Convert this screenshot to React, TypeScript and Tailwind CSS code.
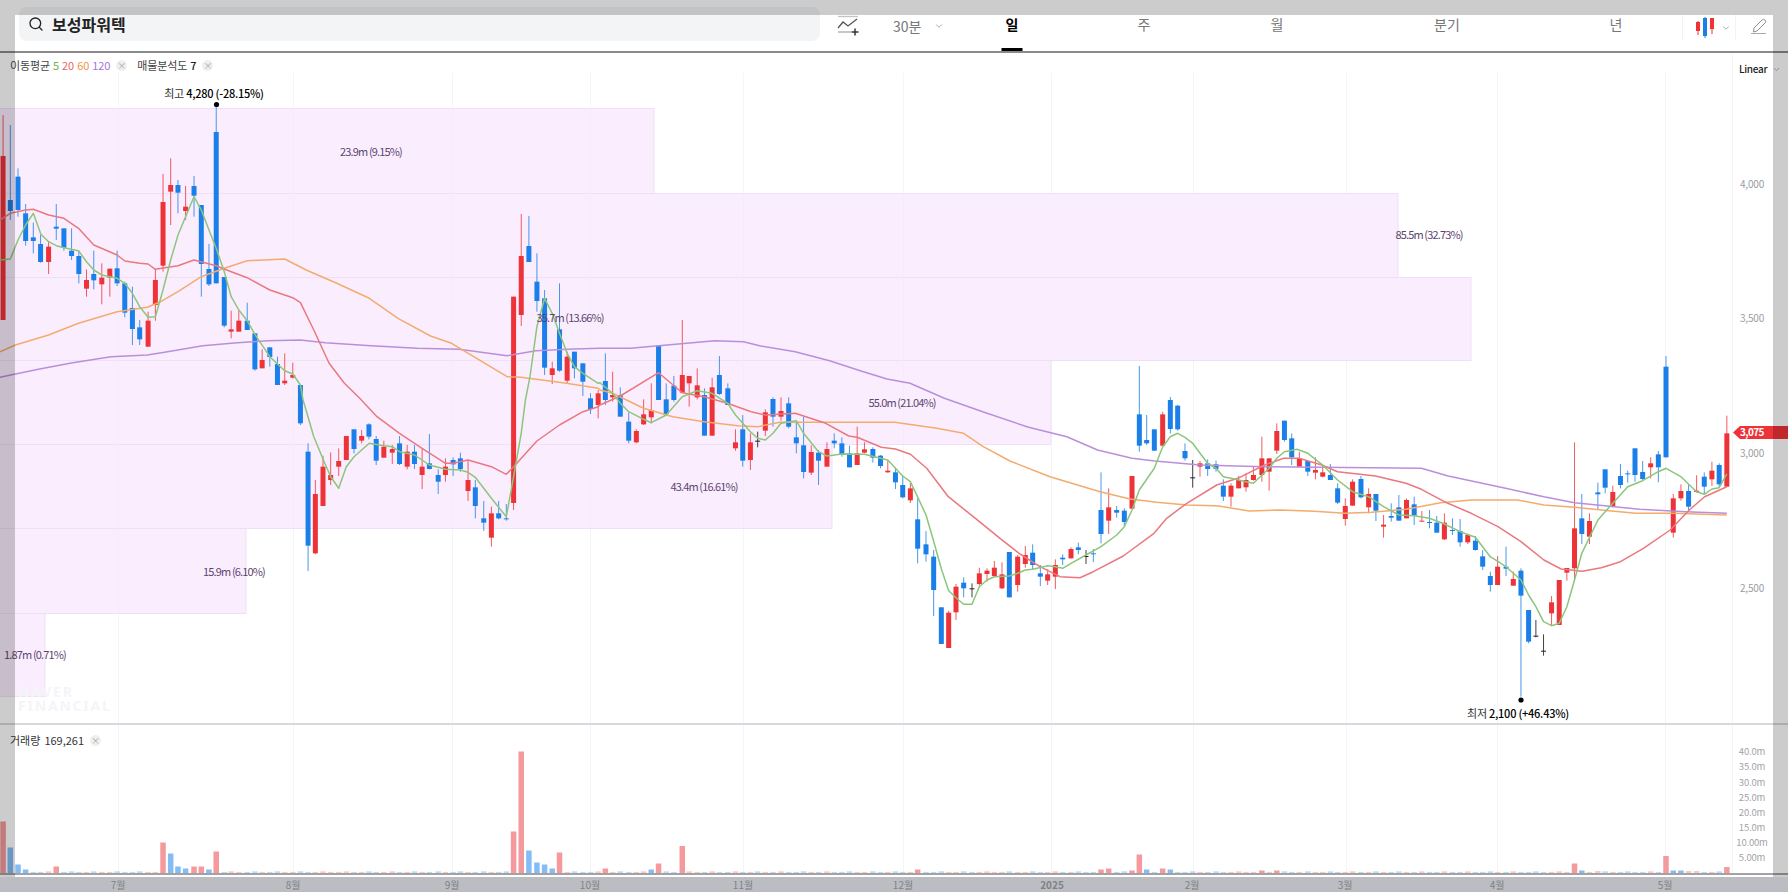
import React from "react";
import { Search, ChevronDown } from "lucide-react";

type Frame = (x: number, y: number) => [number, number];
const F3: Frame = (x, y) => [x / 2.613, 100 + y / 3];
const F5: Frame = (x, y) => [x / 2.613, 400 + y / 3];
const F4: Frame = (x, y) => [600 + x / 2.613, 200 + y / 3];
const F9: Frame = (x, y) => [850 + x / 3, 400 + y / 3];
const F8: Frame = (x, y) => [1188 + x / 2.613, 350 + y / 3];

type Raw = [number, number, number, number, number, string];
type C = { x: number; t: number; b: number; h: number; l: number; c: string };

const mapC = (f: Frame, rows: Raw[]): C[] =>
  rows.map(([x, t, b, h, l, c]) => {
    const [rx, rt] = f(x, t);
    const [, rb] = f(x, b);
    const [, rh] = f(x, h);
    const [, rl] = f(x, l);
    return { x: rx, t: rt, b: rb, h: rh, l: rl, c };
  });

const candles: C[] = [
  ...mapC(F3, [
    [8, 168, 660, 45, 660, "r"], [27, 300, 333, 75, 360, "b"], [47, 230, 330, 205, 350, "b"], [67, 340, 423, 312, 437, "b"],
    [87, 412, 423, 368, 460, "b"], [106, 432, 486, 405, 488, "b"], [127, 440, 486, 425, 522, "r"], [147, 380, 386, 312, 420, "b"],
    [167, 385, 443, 385, 452, "b"], [187, 452, 468, 385, 480, "b"], [206, 468, 522, 452, 550, "b"], [226, 540, 566, 508, 590, "r"],
    [245, 522, 541, 452, 568, "b"], [266, 533, 553, 490, 613, "r"], [287, 506, 533, 506, 590, "r"], [306, 505, 550, 452, 558, "b"],
    [326, 550, 638, 545, 652, "b"], [346, 624, 687, 560, 735, "b"], [365, 682, 718, 660, 735, "b"], [387, 662, 740, 635, 740, "r"],
    [406, 540, 615, 507, 662, "r"], [426, 306, 497, 222, 515, "r"], [446, 255, 275, 175, 375, "r"], [465, 255, 278, 240, 340, "b"],
    [485, 320, 333, 258, 360, "r"], [507, 258, 287, 228, 350, "b"], [526, 315, 492, 315, 590, "b"], [546, 507, 553, 432, 558, "b"],
    [565, 96, 550, 12, 550, "b"], [586, 531, 677, 531, 682, "b"], [604, 688, 695, 632, 715, "r"], [624, 662, 695, 632, 695, "r"],
    [646, 662, 690, 608, 690, "b"], [666, 700, 808, 700, 812, "b"], [685, 780, 805, 748, 805, "r"], [705, 742, 771, 742, 800, "b"],
    [725, 792, 855, 770, 855, "b"], [744, 842, 850, 760, 855, "r"], [765, 825, 833, 788, 835, "r"], [785, 855, 970, 855, 975, "b"],
  ]),
  ...mapC(F5, [
    [805, 155, 437, 130, 513, "b"], [824, 282, 460, 240, 463, "r"], [844, 200, 318, 167, 318, "r"], [864, 225, 240, 157, 255, "r"],
    [885, 183, 200, 145, 228, "r"], [905, 108, 180, 108, 180, "r"], [925, 88, 147, 88, 160, "b"], [945, 108, 122, 90, 130, "r"],
    [964, 73, 110, 70, 118, "b"], [983, 117, 182, 108, 195, "b"], [1003, 140, 173, 122, 173, "r"], [1025, 147, 158, 135, 192, "r"],
    [1044, 130, 192, 108, 195, "b"], [1064, 155, 200, 135, 208, "r"], [1083, 155, 192, 135, 207, "b"], [1103, 200, 225, 145, 267, "r"],
    [1122, 190, 207, 102, 208, "b"], [1145, 225, 245, 208, 282, "b"], [1164, 200, 225, 175, 245, "r"], [1184, 180, 193, 172, 228, "b"],
    [1203, 175, 207, 158, 215, "b"], [1223, 240, 273, 180, 303, "r"], [1242, 262, 318, 240, 355, "b"], [1264, 355, 368, 303, 393, "b"],
    [1284, 340, 413, 320, 440, "r"], [1303, 340, 355, 303, 358, "b"], [1323, 355, 357, 312, 362, "b"],
  ]),
  ...mapC(F3, [
    [1342, 590, 1209, 590, 1230, "r"], [1362, 468, 645, 342, 678, "r"], [1382, 438, 486, 348, 486, "b"], [1403, 545, 603, 460, 635, "b"],
    [1423, 595, 803, 570, 825, "b"], [1443, 805, 825, 785, 852, "r"], [1462, 688, 812, 550, 815, "b"], [1482, 770, 842, 755, 852, "r"],
    [1501, 755, 805, 755, 835, "b"], [1523, 790, 845, 790, 888, "b"], [1543, 895, 927, 880, 942, "b"], [1563, 880, 915, 870, 955, "r"],
  ]),
  ...mapC(F4, [
    [14, 543, 600, 460, 615, "b"], [33, 585, 592, 515, 605, "r"], [53, 585, 650, 562, 650, "b"], [75, 665, 722, 637, 730, "b"],
    [95, 693, 727, 688, 730, "r"], [114, 643, 673, 598, 675, "r"], [134, 630, 652, 550, 670, "r"], [153, 437, 600, 437, 600, "b"],
    [173, 598, 642, 550, 645, "b"], [193, 557, 600, 528, 605, "b"], [215, 525, 578, 360, 578, "r"], [233, 528, 550, 528, 620, "r"],
    [254, 556, 592, 505, 598, "r"], [273, 585, 707, 565, 707, "b"], [293, 562, 707, 533, 707, "r"], [312, 525, 582, 468, 585, "b"],
    [334, 565, 615, 550, 615, "b"], [354, 727, 745, 688, 752, "r"], [373, 688, 782, 645, 800, "b"], [393, 727, 780, 700, 810, "r"],
    [412, 722, 724, 695, 742, "d"], [432, 637, 692, 628, 708, "r"], [452, 597, 650, 592, 680, "b"], [473, 633, 650, 592, 662, "r"],
    [493, 610, 680, 592, 685, "b"], [513, 712, 730, 665, 760, "b"], [532, 736, 816, 650, 835, "b"], [552, 756, 818, 736, 825, "r"],
    [571, 758, 782, 750, 855, "b"], [593, 747, 800, 727, 800, "r"], [612, 722, 730, 700, 745, "b"], [632, 730, 765, 712, 770, "b"],
    [652, 760, 802, 737, 802, "b"], [672, 760, 795, 680, 795, "r"], [691, 748, 758, 727, 760, "r"], [713, 747, 773, 742, 788, "b"],
    [733, 767, 798, 765, 805, "b"], [752, 812, 817, 782, 818, "r"], [772, 817, 847, 803, 867, "b"], [791, 855, 892, 828, 895, "b"],
    [811, 865, 901, 845, 909, "r"],
  ]),
  ...mapC(F9, [
    [203, 358, 446, 295, 490, "b"], [228, 433, 463, 393, 485, "b"], [251, 470, 570, 450, 648, "b"], [274, 622, 732, 622, 732, "b"],
    [296, 638, 744, 632, 744, "r"], [318, 560, 637, 552, 660, "r"], [341, 548, 565, 532, 592, "b"], [366, 565, 567, 550, 592, "d"],
    [388, 520, 552, 503, 557, "r"], [411, 512, 522, 505, 545, "r"], [433, 503, 528, 483, 530, "r"], [456, 523, 565, 487, 567, "r"],
    [478, 456, 592, 456, 592, "b"], [503, 470, 555, 465, 575, "r"], [526, 465, 492, 438, 503, "r"], [548, 458, 495, 433, 510, "b"],
    [571, 520, 530, 495, 558, "b"], [593, 523, 542, 508, 555, "r"], [616, 495, 530, 478, 567, "r"], [638, 473, 478, 463, 495, "b"],
    [663, 447, 475, 442, 476, "r"], [685, 442, 450, 428, 463, "b"], [708, 468, 470, 450, 492, "d"], [730, 460, 463, 447, 486, "b"],
    [753, 330, 402, 217, 430, "b"], [776, 322, 362, 265, 402, "r"], [800, 330, 338, 318, 353, "b"], [823, 332, 366, 325, 378, "b"],
    [846, 228, 326, 228, 326, "r"], [868, 43, 137, -102, 155, "b"], [890, 120, 130, 45, 135, "b"], [913, 88, 152, 88, 152, "b"],
    [938, 43, 137, 35, 137, "r"], [961, 0, 87, -9, 100, "b"], [983, 17, 88, 15, 92, "b"], [1005, 153, 175, 130, 182, "b"],
    [1028, 232, 234, 180, 263, "d"], [1050, 190, 200, 183, 230, "r"], [1073, 190, 207, 178, 228, "b"], [1098, 193, 207, 182, 215, "b"],
    [1120, 257, 290, 238, 303, "b"], [1143, 257, 290, 250, 320, "r"], [1166, 240, 265, 228, 265, "r"], [1188, 240, 262, 220, 275, "r"],
  ]),
  ...mapC(F8, [
    [171, 375, 390, 350, 392, "r"], [193, 325, 375, 260, 395, "r"], [212, 325, 365, 325, 422, "r"], [232, 243, 302, 220, 312, "r"],
    [252, 212, 270, 212, 275, "b"], [271, 265, 322, 250, 345, "b"], [291, 325, 350, 305, 350, "r"], [313, 333, 365, 333, 378, "b"],
    [333, 360, 368, 322, 388, "r"], [352, 367, 380, 345, 382, "r"], [372, 375, 390, 342, 390, "b"], [391, 415, 458, 400, 462, "b"],
    [411, 468, 507, 445, 527, "r"], [430, 395, 467, 388, 467, "r"], [452, 387, 442, 378, 445, "b"], [472, 432, 472, 415, 490, "r"],
    [491, 432, 482, 432, 513, "b"], [511, 524, 530, 495, 563, "r"], [531, 498, 503, 460, 515, "b"], [551, 472, 512, 435, 512, "b"],
    [571, 450, 505, 445, 505, "r"], [591, 463, 497, 440, 525, "b"], [611, 512, 514, 483, 514, "r"], [631, 516, 518, 480, 535, "b"],
    [650, 518, 548, 498, 548, "b"], [670, 518, 568, 490, 570, "r"], [691, 540, 543, 505, 555, "b"], [711, 543, 577, 507, 590, "b"],
    [731, 555, 577, 553, 582, "r"], [751, 572, 600, 558, 602, "b"], [770, 619, 650, 600, 660, "b"], [790, 678, 705, 665, 725, "b"],
    [809, 650, 705, 618, 705, "r"], [831, 650, 656, 590, 678, "b"], [850, 687, 707, 665, 708, "r"], [870, 662, 737, 655, 1040, "b"],
    [890, 780, 875, 780, 880, "b"], [909, 857, 859, 810, 862, "d"], [929, 902, 904, 853, 917, "d"], [950, 757, 790, 738, 825, "r"],
    [970, 690, 825, 690, 825, "r"], [990, 654, 668, 654, 692, "r"], [1010, 535, 655, 277, 688, "r"], [1029, 505, 552, 432, 582, "b"],
    [1049, 513, 560, 490, 582, "r"], [1071, 427, 433, 398, 480, "b"], [1090, 358, 413, 358, 430, "b"], [1110, 426, 470, 407, 472, "r"],
    [1130, 378, 405, 342, 415, "b"], [1149, 370, 373, 362, 398, "b"], [1168, 295, 375, 295, 395, "b"], [1188, 366, 387, 333, 390, "b"],
    [1209, 340, 352, 322, 385, "r"], [1229, 313, 352, 303, 397, "b"], [1249, 50, 322, 18, 322, "b"], [1268, 445, 548, 432, 563, "r"],
    [1288, 423, 445, 403, 452, "r"], [1308, 423, 470, 405, 482, "b"], [1329, 422, 426, 376, 428, "r"], [1349, 380, 410, 367, 435, "b"],
    [1369, 362, 388, 335, 408, "r"], [1388, 345, 403, 340, 412, "b"], [1408, 250, 410, 197, 410, "r"],
  ]),
];

const seg = (f: Frame, pts: number[][]) => pts.map(([x, y]) => f(x, y));
const toPts = (p: [number, number][]) => p.map(([x, y]) => `${x.toFixed(1)},${y.toFixed(1)}`).join(" ");

const green = [
  ...seg(F3, [[0,480],[27,477],[47,420],[67,375],[87,340],[107,403],[127,425],[147,437],[167,443],[205,452],[226,485],[245,510],[266,525],[306,535],[326,550],[346,580],[365,620],[387,652],[406,650],[426,570],[446,480],[465,405],[485,350],[507,290],[526,330],[546,390],[565,445],[586,515],[604,590],[624,630],[646,662],[666,703],[705,770],[744,812],[765,822],[785,855]]),
  ...seg(F5, [[792,0],[820,110],[845,180],[864,230],[885,265],[905,200],[925,170],[945,150],[965,130],[1003,137],[1025,140],[1044,155],[1083,165],[1122,195],[1164,208],[1203,210],[1223,217],[1242,232],[1284,295],[1323,350],[1342,230],[1362,100],[1373,0]]),
  ...seg(F3, [[1385,830],[1403,680],[1423,595],[1443,640],[1462,700],[1482,760],[1501,800],[1523,820],[1563,850]]),
  ...seg(F4, [[0,548],[33,580],[53,610],[75,635],[114,658],[134,668],[173,645],[215,590],[254,572],[293,580],[334,610],[354,645],[393,695],[412,715],[432,720],[452,700],[473,670],[513,662],[532,700],[571,755],[593,768],[632,762],[691,763],[752,780],[791,828]]),
  ...seg(F9, [[181,245],[205,295],[228,345],[250,420],[275,510],[296,572],[318,593],[341,613],[366,613],[388,560],[411,540],[433,530],[478,528],[503,520],[526,510],[548,508],[593,497],[616,500],[638,505],[663,490],[708,465],[753,440],[800,405],[823,380],[846,330],[868,270],[913,205],[938,140],[961,110],[983,100],[1005,112],[1028,130],[1050,160],[1073,190],[1098,205],[1120,230],[1143,235],[1166,240],[1188,245]]),
  ...seg(F8, [[171,400],[212,355],[232,325],[252,305],[285,298],[313,310],[352,345],[391,390],[430,425],[472,440],[511,470],[551,495],[591,497],[631,505],[670,522],[711,545],[751,562],[790,620],[831,650],[870,690],[890,735],[909,770],[929,815],[950,827],[970,820],[990,770],[1010,690],[1029,610],[1071,510],[1090,485],[1110,460],[1149,410],[1188,392],[1229,365],[1249,355],[1288,380],[1329,425],[1349,433],[1369,417],[1388,413],[1408,372]]),
];
const pink = [
  ...seg(F3, [[0,360],[27,340],[67,330],[87,328],[127,345],[167,355],[205,385],[245,435],[306,465],[326,483],[365,490],[387,492],[406,508],[465,497],[507,480],[565,497],[604,515],[646,533],[705,570],[765,593],[785,608],[820,690],[860,790],[900,850],[940,895]]),
  ...seg(F5, [[985,50],[1044,100],[1103,145],[1164,190],[1184,190],[1223,180],[1284,200],[1323,223],[1342,200],[1403,123],[1462,75],[1523,35],[1563,20]]),
  ...seg(F4, [[0,615],[53,588],[153,518],[215,578],[272,590],[333,610],[395,635],[432,645],[510,640],[590,670],[650,708],[672,712],[735,742],[772,747],[811,763]]),
  ...seg(F9, [[230,205],[295,290],[370,350],[450,415],[510,462],[570,500],[630,530],[690,533],[730,515],[820,468],[912,400],[950,355],[1010,310]]),
  ...seg(F8, [[75,405],[130,385],[200,345],[250,325],[290,325],[350,345],[391,365],[490,378],[570,400],[610,418],[670,455],[740,490],[810,530],[870,575],[930,630],[975,657],[1030,664],[1080,653],[1130,635],[1190,595],[1260,540],[1310,480],[1350,440],[1408,410]]),
];
const orange = [
  ...seg(F3, [[0,755],[40,735],[127,705],[205,670],[306,635],[385,622],[420,605],[465,575],[526,530],[586,505],[646,482],[744,477],[800,510],[880,550],[965,595],[1040,655],[1125,708],[1180,730],[1325,830],[1362,832],[1480,850],[1563,865]]),
  ...seg(F4, [[0,570],[33,580],[114,625],[190,650],[272,665],[360,677],[412,680],[470,667],[610,667],[770,667],[880,685],[950,700]]),
  ...seg(F9, [[400,140],[480,183],[600,230],[750,275],[840,297],[920,307],[1010,315],[1090,317]]),
  ...seg(F8, [[80,468],[160,483],[240,480],[330,484],[410,490],[480,487],[570,478],[660,458],[740,450],[860,450],[930,465],[1010,472],[1100,482],[1170,490],[1270,490],[1408,495]]),
];
const purple = [
  ...seg(F3, [[0,832],[100,808],[190,788],[290,770],[385,765],[430,757],[530,737],[620,728],[700,722],[785,720],[850,728],[970,737],[1090,745],[1200,748],[1325,767],[1400,752],[1500,747],[1568,745]]),
  ...seg(F4, [[80,445],[153,437],[300,422],[375,425],[420,438],[510,455],[600,482],[680,512],[750,537],[810,550],[900,595],[1000,635],[1120,682],[1220,710],[1300,750],[1390,775],[1450,783],[1568,795]]),
  ...seg(F8, [[200,350],[610,355],[680,378],[830,415],[930,440],[1010,458],[1180,478],[1300,485],[1408,490]]),
];

const COL: Record<string, string> = { r: "#ee3338", b: "#1a7fe8", d: "#222222" };
const gridX = [118, 293, 452, 590, 743, 903, 1051, 1193, 1346, 1497, 1665];
const boxes = [
  [108, 193, 654], [193, 277, 1398], [277, 360, 1471], [360, 444, 1051], [444, 528, 832], [528, 613, 246], [613, 696, 45],
];

const volMajor: [number, number, string][] = [
  [3,52,"r"],[10,26,"b"],[18,9,"b"],[25,4,"b"],[56,7,"r"],[162,31,"r"],[170,20,"b"],[177,7,"b"],[185,5,"b"],[193,7,"r"],[201,7,"r"],[208,4,"b"],[216,22,"r"],[513,42,"r"],[521,122,"r"],[529,23,"b"],[537,11,"b"],[544,9,"b"],[552,5,"b"],[559,21,"r"],[605,5,"r"],[650,4,"b"],[658,10,"r"],[681,27.5,"r"],[918,4,"r"],[1101,4,"r"],[1109,5,"r"],[1131,3,"r"],[1139,19,"r"],[1147,4,"b"],[1162,5,"r"],[1170,4,"b"],[1261,3,"r"],[1276,3,"r"],[1574,10,"r"],[1581,3,"b"],[1596,2.5,"r"],[1665.6,17.5,"r"],[1673,3,"b"],[1680,3,"b"],[1688,2.5,"r"],[1695,2.5,"r"],[1726,6.5,"r"],
];
const volumes = candles.map((c, i) => {
  let h = i % 3 === 0 ? 2.2 : 1.6;
  let col = c.c;
  for (const [x, v, k] of volMajor)
    if (Math.abs(c.x - x) < 3.8) {
      h = v;
      col = k;
    }
  return { x: c.x, h, c: col };
});

function CloseDot() {
  return (
    <span className="ml-[6px] flex h-[11px] w-[11px] items-center justify-center rounded-full bg-[#efefef] text-[9px] leading-none text-[#a5a5a5]">×</span>
  );
}

const TABS = [
  { l: "일", w: "w-[126px]", on: true },
  { l: "주", w: "w-[138px]", on: false },
  { l: "월", w: "w-[128px]", on: false },
  { l: "분기", w: "w-[212px]", on: false },
  { l: "년", w: "w-[126px]", on: false },
];

const VP = [
  { t: "23.9m (9.15%)", c: "left-[371px] top-[98px]" },
  { t: "85.5m (32.73%)", c: "left-[1429px] top-[181px]" },
  { t: "35.7m (13.66%)", c: "left-[570px] top-[264px]" },
  { t: "55.0m (21.04%)", c: "left-[902px] top-[349px]" },
  { t: "43.4m (16.61%)", c: "left-[704px] top-[433px]" },
  { t: "15.9m (6.10%)", c: "left-[234px] top-[518px]" },
  { t: "1.87m (0.71%)", c: "left-[35px] top-[601px]" },
];
const PRICE = [
  { t: "4,000", c: "top-[131px]" },
  { t: "3,500", c: "top-[265px]" },
  { t: "3,000", c: "top-[400px]" },
  { t: "2,500", c: "top-[535px]" },
];
const VOLAX = [
  { t: "40.0m", c: "top-[27px]" }, { t: "35.0m", c: "top-[42px]" }, { t: "30.0m", c: "top-[58px]" }, { t: "25.0m", c: "top-[73px]" },
  { t: "20.0m", c: "top-[88px]" }, { t: "15.0m", c: "top-[103px]" }, { t: "10.00m", c: "top-[118px]" }, { t: "5.00m", c: "top-[133px]" },
];
const MONTHS = [
  { t: "7월", c: "left-[118px]" }, { t: "8월", c: "left-[293px]" }, { t: "9월", c: "left-[452px]" }, { t: "10월", c: "left-[590px]" },
  { t: "11월", c: "left-[743px]" }, { t: "12월", c: "left-[903px]" }, { t: "2025", c: "left-[1052px] font-bold text-[#555555]" },
  { t: "2월", c: "left-[1192px]" }, { t: "3월", c: "left-[1345px]" }, { t: "4월", c: "left-[1497px]" }, { t: "5월", c: "left-[1665px]" },
];

export default function App() {
  return (
    <div className="relative flex h-[892px] w-[1788px] flex-col overflow-hidden bg-white font-['Noto_Sans_CJK_KR','Noto_Sans',sans-serif] text-[#222222]">
      {/* header */}
      <header className="flex h-[53px] shrink-0 items-start border-b-2 border-[#8a8a8a] bg-white">
        <div className="ml-[19px] mt-[7px] flex h-[34px] w-[801px] items-center gap-[8px] rounded-[8px] bg-[#f2f4f6] pl-[9px]">
          <Search size={16} strokeWidth={2} className="text-[#222222]" />
          <span className="text-[16px] font-bold leading-none">보성파워텍</span>
        </div>
        <div className="ml-[17px] mt-[15px] flex h-[22px] w-[24px] items-center justify-center">
          <svg width="24" height="22" viewBox="0 0 24 22" fill="none" stroke="#555" strokeWidth="1.3">
            <path d="M1 1.5h20" stroke="#c4c4c4" />
            <path d="M1 13l5-6 5 4 9-7" />
            <path d="M1 17h13" stroke="#aaa" />
            <path d="M18 13.5v7M14.5 17h7" stroke="#333" strokeWidth="1.5" />
          </svg>
        </div>
        <div className="ml-[32px] mt-[15px] flex h-[22px] w-[56px] items-center gap-[13px] text-[14px] leading-none text-[#777777]">
          <span>30분</span>
          <ChevronDown size={10} className="text-[#999999]" />
        </div>
        <div className="flex h-[51px] items-start">
          {TABS.map((t) => (
            <div key={t.l} className={`relative flex h-[51px] items-start justify-center pt-[17px] text-[14px] leading-none ${t.w} ${t.on ? "font-bold text-black" : "text-[#777777]"}`}>
              {t.l}
              {t.on && <span className="absolute bottom-0 left-1/2 h-[3px] w-[21px] -translate-x-1/2 bg-black" />}
            </div>
          ))}
        </div>
        <div className="ml-[3px] mt-[15px] flex h-[25px] w-[54px] items-center border-x border-[#f3f3f3] pl-[12px]">
          <svg width="20" height="22" viewBox="0 0 20 22">
            <path d="M3 4v14M17 1v16" stroke="#ee3338" />
            <path d="M10 0v21" stroke="#1a7fe8" />
            <rect x="1" y="5" width="4" height="9" fill="#ee3338" />
            <rect x="15" y="1" width="4" height="11" fill="#ee3338" />
            <rect x="8" y="1" width="4" height="18" fill="#1a7fe8" />
          </svg>
          <ChevronDown size={10} className="ml-[6px] text-[#999999]" />
        </div>
        <div className="ml-[15px] mt-[18px] flex h-[18px] w-[16px] items-start">
          <svg width="16" height="18" viewBox="0 0 16 18" fill="none" stroke="#8f8f8f" strokeWidth="1">
            <path d="M3 10L11 2a2.1 2.1 0 0 1 3 3l-8 8-3.5 1z" />
            <path d="M0 15.5h15" stroke="#aaa" />
          </svg>
        </div>
      </header>

      {/* price panel */}
      <section className="relative h-[672px] shrink-0 border-b-2 border-[#d6d8dd]">
        <svg className="absolute inset-0 h-[670px] w-[1788px] blur-[0.3px]" viewBox="0 53 1788 670">
          {gridX.map((x) => (
            <line key={x} x1={x + 0.5} x2={x + 0.5} y1={73} y2={724} stroke="#f5f5f7" />
          ))}
          <line x1={1732.5} x2={1732.5} y1={53} y2={724} stroke="#f5f5f7" />
          {boxes.map(([t, b, r]) => (
            <rect key={t} x={-1} y={t + 0.5} width={r + 1} height={b - t} fill="#faeefe" stroke="#efe0f7" />
          ))}
          {gridX.filter((x) => x < 1051).map((x) => (
            <line key={x} x1={x + 0.5} x2={x + 0.5} y1={x < 654 ? 108 : 193} y2={x < 246 ? 613 : x < 832 ? 528 : 444} stroke="#f7eafc" />
          ))}
          {candles.map((c, i) => (
            <g key={i} fill={COL[c.c]}>
              <rect x={c.x - 0.5} y={c.h} width={1} height={Math.max(c.l - c.h, 1)} opacity={c.c === "d" ? 0.85 : 0.8} />
              <rect x={c.x - 2.5} y={c.t} width={5} height={Math.max(c.b - c.t, 1)} />
            </g>
          ))}
          <polyline points={toPts(purple)} fill="none" stroke="#b98fdc" strokeWidth="1.5" strokeLinejoin="round" />
          <polyline points={toPts(orange)} fill="none" stroke="#f3ab6e" strokeWidth="1.5" strokeLinejoin="round" />
          <polyline points={toPts(pink)} fill="none" stroke="#ea787e" strokeWidth="1.5" strokeLinejoin="round" />
          <polyline points={toPts(green)} fill="none" stroke="#8cc67c" strokeWidth="1.5" strokeLinejoin="round" />
          <circle cx={216.5} cy={104.5} r={2.6} fill="#000" />
          <circle cx={1521} cy={700} r={2.6} fill="#000" />
          <polygon points="1733,432.5 1740,426 1788,426 1788,439 1740,439" fill="#ee3338" />
        </svg>

        {VP.map((v) => (
          <span key={v.t} className={`absolute -translate-x-1/2 -translate-y-1/2 whitespace-nowrap text-[11px] leading-none tracking-[-0.85px] text-[#5c4470] ${v.c}`}>{v.t}</span>
        ))}

        <div className="absolute left-[10px] top-[6px] flex h-[12px] items-center text-[11px] leading-none tracking-[-0.1px] text-[#444444]">
          <span>이동평균</span>
          <span className="ml-[3px] text-[#69b34c]">5</span>
          <span className="ml-[3px] text-[#e9636a]">20</span>
          <span className="ml-[3px] text-[#f0953f]">60</span>
          <span className="ml-[3px] text-[#a775d8]">120</span>
          <CloseDot />
          <span className="ml-[10px]">매물분석도</span>
          <span className="ml-[3px] font-medium text-[#222222]">7</span>
          <CloseDot />
        </div>

        <span className="absolute left-[214px] top-[40px] -translate-x-1/2 -translate-y-1/2 whitespace-nowrap text-[11px] leading-none tracking-[-0.25px] text-[#333333]">
          최고 <b className="font-medium text-black">4,280 (-28.15%)</b>
        </span>
        <span className="absolute left-[1518px] top-[660px] -translate-x-1/2 -translate-y-1/2 whitespace-nowrap text-[11px] leading-none tracking-[-0.25px] text-[#333333]">
          최저 <b className="font-medium text-black">2,100 (+46.43%)</b>
        </span>

        <div className="absolute left-[18px] top-[632px] flex flex-col font-['Noto_Sans',sans-serif] text-[14px] font-bold leading-[14px] tracking-[1.8px] text-[#f3f5f9]">
          <span>NAVER</span>
          <span>FINANCIAL</span>
        </div>

        <span className="absolute left-[1739px] top-[16px] -translate-y-1/2 text-[10px] font-medium leading-none tracking-[-0.3px] text-[#222222]">Linear</span>
        <ChevronDown size={9} className="absolute left-[1772px] top-[12px] text-[#999999]" />

        {PRICE.map((p) => (
          <span key={p.t} className={`absolute left-[1752px] -translate-x-1/2 -translate-y-1/2 text-[10px] leading-none tracking-[-0.2px] text-[#9a9da3] ${p.c}`}>{p.t}</span>
        ))}
        <span className="absolute left-[1752px] top-[379px] -translate-x-1/2 -translate-y-1/2 text-[10px] font-bold leading-none tracking-[-0.6px] text-white">3,075</span>
      </section>

      {/* volume panel */}
      <section className="relative h-[152px] shrink-0">
        <svg className="absolute inset-0 h-[152px] w-[1788px] blur-[0.3px]" viewBox="0 725 1788 152">
          {gridX.map((x) => (
            <line key={x} x1={x + 0.5} x2={x + 0.5} y1={725} y2={873} stroke="#f5f5f7" />
          ))}
          <line x1={1732.5} x2={1732.5} y1={725} y2={873} stroke="#f5f5f7" />
          {volumes.map((v, i) => (
            <rect key={i} x={v.x - 2.75} y={873.5 - v.h} width={5.5} height={v.h} fill={v.c === "r" ? "#f4999c" : "#84bcf6"} opacity={v.h < 3 ? 0.55 : 1} />
          ))}
          <rect x={0} y={873} width={1788} height={2} fill="#a2a2a2" />
        </svg>
        <div className="absolute left-[10px] top-[9px] flex h-[12px] items-center text-[11px] leading-none text-[#333333]">
          <span>거래량</span>
          <span className="ml-[4px]">169,261</span>
          <CloseDot />
        </div>
        {VOLAX.map((p) => (
          <span key={p.t} className={`absolute left-[1752px] -translate-x-1/2 -translate-y-1/2 whitespace-nowrap text-[9.5px] leading-none tracking-[-0.2px] text-[#a0a3a9] ${p.c}`}>{p.t}</span>
        ))}
      </section>

      {/* time axis */}
      <footer className="relative h-[15px] shrink-0 bg-[#eaedf3]">
        {MONTHS.map((m) => (
          <span key={m.t} className={`absolute top-1/2 -translate-x-1/2 -translate-y-1/2 text-[10px] leading-none text-[#a0a3a8] ${m.c}`}>{m.t}</span>
        ))}
      </footer>

      {/* dim overlay frame */}
      <div className="pointer-events-none absolute inset-x-0 top-0 h-[15px] bg-black/20" />
      <div className="pointer-events-none absolute bottom-0 left-0 top-[15px] w-[15px] bg-black/20" />
      <div className="pointer-events-none absolute bottom-0 right-0 top-[15px] w-[15px] bg-black/20" />
      <div className="pointer-events-none absolute bottom-0 left-[15px] right-[15px] h-[15px] bg-black/20" />
    </div>
  );
}
